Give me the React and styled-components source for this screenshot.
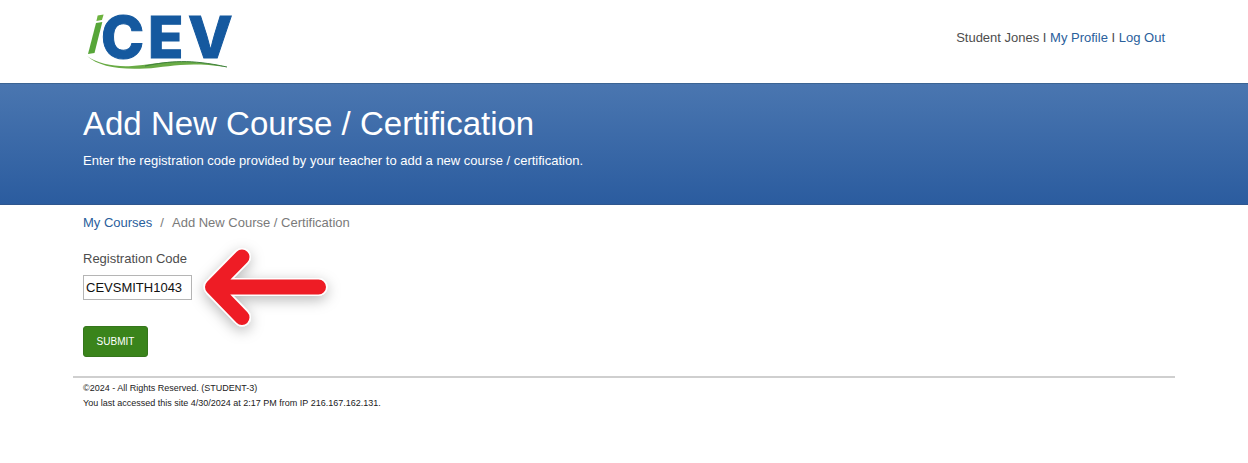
import React, { useState } from "react";
import styled, { createGlobalStyle } from "styled-components";

const GlobalStyle = createGlobalStyle`
  * {
    box-sizing: border-box;
  }

  body {
    margin: 0;
    background: #ffffff;
    color: #4d4d4d;
    font-family: "Liberation Sans", Arial, sans-serif;
    font-size: 13px;
    line-height: 16px;
  }
`;

const Container = styled.div`
  max-width: 1102px;
  margin: 0 auto;
  padding: 0 10px;
`;

const HeaderRow = styled(Container)`
  display: flex;
  align-items: flex-start;
  justify-content: space-between;
`;

const LogoSvg = styled.svg`
  display: block;
  width: 160px;
  height: 83px;
`;

const UserNav = styled.nav`
  padding-top: 30px;
`;

const TextLink = styled.a`
  color: #2a609c;
  text-decoration: none;

  &:hover {
    text-decoration: underline;
  }
`;

const Banner = styled.section`
  padding: 20px 0 35px;
  background: linear-gradient(#4a76b0, #2b5c9f);
  border-top: 1px solid #3c6493;
  border-bottom: 1px solid #2f568e;
  color: #ffffff;
`;

const Title = styled.h1`
  margin: 0 0 9px;
  font-size: 33px;
  font-weight: 400;
  line-height: 40px;
`;

const Intro = styled.p`
  margin: 0;
`;

const Crumbs = styled.ol`
  display: flex;
  margin: 0;
  padding: 10px 0 20px;
  list-style: none;
  color: #7a7a7a;
`;

const Crumb = styled.li`
  & + &::before {
    content: "/";
    padding: 0 8px;
  }
`;

const Label = styled.label`
  display: block;
  margin-bottom: 8px;
`;

const FieldRow = styled.div`
  position: relative;
  display: flex;
`;

const CodeInput = styled.input`
  width: 109px;
  height: 25px;
  padding: 0 2px;
  border: 1px solid #b5b5b5;
  background: #ffffff;
  color: #111111;
  font-family: inherit;
  font-size: 13px;
`;

const ArrowSvg = styled.svg`
  position: absolute;
  top: -42px;
  left: 107px;
  width: 150px;
  height: 110px;
  overflow: visible;
  pointer-events: none;
`;

const SubmitButton = styled.button`
  margin: 26px 0 19px;
  width: 65px;
  height: 31px;
  padding: 0;
  border: 1px solid #35761c;
  border-radius: 3px;
  background: #3a841b;
  color: #ffffff;
  font-family: inherit;
  font-size: 10px;
  text-transform: uppercase;
  cursor: pointer;
`;

const Footer = styled.footer`
  max-width: 1102px;
  margin: 0 auto;
  padding: 3px 10px;
  border-top: 2px solid #cfcfcf;
  color: #222222;
  font-size: 9px;
  line-height: 15px;
`;

const FooterLine = styled.p`
  margin: 0;
`;

const Logo = () => (
  <LogoSvg viewBox="83 0 160 83" role="img" aria-label="iCEV">
    <path d="M96 23L102.300 22L94.500 53L88 54z" fill="#57a639" />
    <path d="M97.700 15.500L103.600 14.500L102 20L96.400 21z" fill="#6db33f" />
    <g
      fill="#15599f"
      stroke="#15599f"
      strokeWidth="1"
      fontFamily="Inter, sans-serif"
      fontWeight="800"
      fontSize="58"
    >
      <text x="101" y="58">C</text>
      <text x="148" y="58">E</text>
      <text x="188" y="58" stroke="#ffffff" strokeWidth="4">V</text>
      <text x="188" y="58">V</text>
    </g>
    <path
      d="M87 56C98 64 115 67 132 66C155 65 178 56 227 67C185 61 170 67 145 68.500C118 70 98 66 87 56z"
      fill="#69ab45"
    />
    <path
      d="M145 66C170 61 190 59 227 67"
      fill="none"
      stroke="#3f7f3d"
      strokeWidth="1"
    />
  </LogoSvg>
);

const Arrow = () => {
  const path = "M318.500 287H214M242 257L212.500 287L242 317.500";
  return (
    <ArrowSvg viewBox="190 233 150 110" aria-hidden="true">
      <defs>
        <filter id="arrowShadow" x="-30%" y="-40%" width="160%" height="190%">
          <feDropShadow dx="0" dy="4" stdDeviation="7" floodOpacity="0.28" />
        </filter>
      </defs>
      <g fill="none" strokeLinecap="round" strokeLinejoin="round">
        <path d={path} stroke="#ffffff" strokeWidth="18" filter="url(#arrowShadow)" />
        <path d={path} stroke="#ee1c25" strokeWidth="15" />
      </g>
    </ArrowSvg>
  );
};

const App = () => {
  const [code, setCode] = useState("CEVSMITH1043");

  return (
    <>
      <GlobalStyle />
      <header>
        <HeaderRow>
          <Logo />
          <UserNav>
            Student Jones I <TextLink href="#profile">My Profile</TextLink> I{" "}
            <TextLink href="#logout">Log Out</TextLink>
          </UserNav>
        </HeaderRow>
      </header>
      <Banner>
        <Container>
          <Title>Add New Course / Certification</Title>
          <Intro>
            Enter the registration code provided by your teacher to add a new course / certification.
          </Intro>
        </Container>
      </Banner>
      <Container as="main">
        <Crumbs>
          <Crumb>
            <TextLink href="#courses">My Courses</TextLink>
          </Crumb>
          <Crumb>Add New Course / Certification</Crumb>
        </Crumbs>
        <form onSubmit={(e) => e.preventDefault()}>
          <Label htmlFor="code">Registration Code</Label>
          <FieldRow>
            <CodeInput id="code" value={code} onChange={(e) => setCode(e.target.value)} />
            <Arrow />
          </FieldRow>
          <SubmitButton type="submit">Submit</SubmitButton>
        </form>
      </Container>
      <Footer>
        <FooterLine>©2024 - All Rights Reserved. (STUDENT-3)</FooterLine>
        <FooterLine>You last accessed this site 4/30/2024 at 2:17 PM from IP 216.167.162.131.</FooterLine>
      </Footer>
    </>
  );
};

export default App;
